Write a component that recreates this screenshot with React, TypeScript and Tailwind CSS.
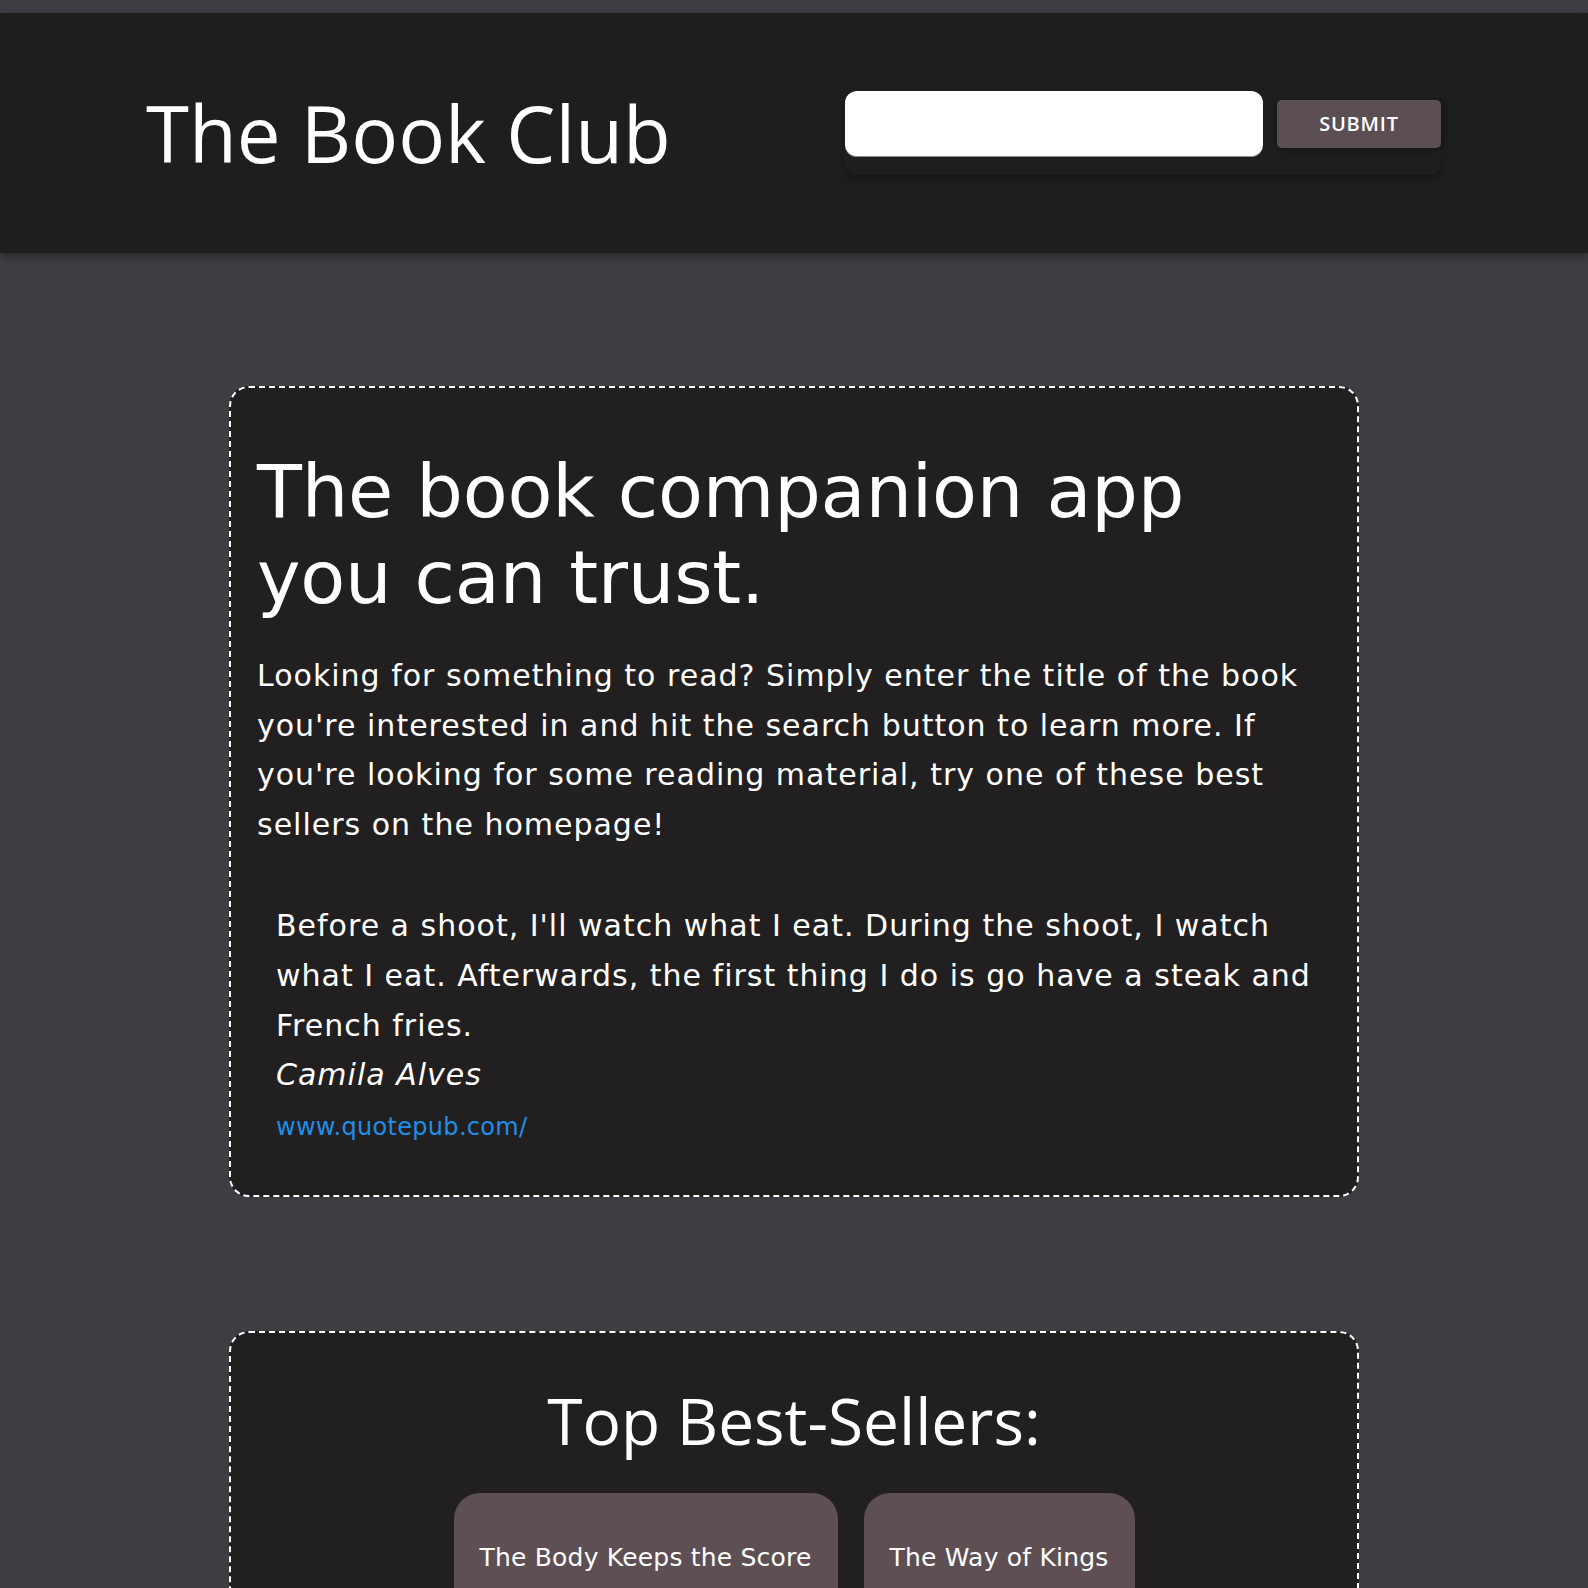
export default function App() {
  const books: string[] = ["The Body Keeps the Score", "The Way of Kings"];

  return (
    <div className="min-h-screen w-full bg-[#3e3d43] pt-[13px] pb-20 font-['DejaVu_Sans',sans-serif] text-white">
      {/* header */}
      <header className="h-[240px] bg-[#1e1e1e] shadow-[0_4px_8px_rgba(0,0,0,0.35)] flex items-center justify-between pl-[146px] pr-[147px]">
        <h1 className="font-['Open_Sans',sans-serif] text-[78px] leading-[106px] font-normal">The Book Club</h1>
        <form
          className="flex items-center gap-[14px] pb-[18px] rounded-xl shadow-[0_5px_8px_rgba(0,0,0,0.25)]"
          onSubmit={(e) => e.preventDefault()}
        >
          <input
            type="text"
            className="w-[418px] h-[66px] rounded-xl bg-white border-b border-[#8a8a8a] outline-none px-4 text-black text-2xl"
          />
          <button
            type="submit"
            className="w-[164px] h-[48px] rounded-[5px] bg-[#5c4f54] font-['Open_Sans',sans-serif] text-[20px] font-semibold tracking-[0.8px] text-white shadow-[0_2px_6px_rgba(0,0,0,0.3)]"
          >
            SUBMIT
          </button>
        </form>
      </header>

      {/* intro */}
      <section className="w-[1130px] mx-auto mt-[133px] rounded-[20px] border-2 border-dashed border-white bg-[#221f20] pt-[61px] pb-[50px] px-[26px]">
        <h2 className="text-[73.5px] leading-[86px] font-normal tracking-[-0.2px]">
          The book companion app
          <br />
          you can trust.
        </h2>
        <p className="mt-[30px] text-[30px] leading-[49.6px] tracking-[1px]">
          Looking for something to read? Simply enter the title of the book you're interested in and hit the search
          button to learn more. If you're looking for some reading material, try one of these best sellers on the
          homepage!
        </p>
        <blockquote className="mt-[52px] mx-[19px] text-[30px] leading-[49.6px] tracking-[1px]">
          <p>
            Before a shoot, I'll watch what I eat. During the shoot, I watch what I eat. Afterwards, the first thing I
            do is go have a steak and French fries.
          </p>
          <p className="italic">Camila Alves</p>
          <a href="#" className="block mt-[9px] text-[24px] leading-[36px] tracking-[0.3px] text-[#1e8fe8]">
            www.quotepub.com/
          </a>
        </blockquote>
      </section>

      {/* best sellers */}
      <section className="w-[1130px] mx-auto mt-[134px] rounded-[20px] border-2 border-dashed border-white bg-[#221f20] pt-[43px] pb-[60px] px-[26px]">
        <h2 className="text-center font-['Open_Sans',sans-serif] text-[64px] leading-[90px] font-normal">
          Top Best-Sellers:
        </h2>
        <div className="mt-[27px] flex justify-center gap-[26px]">
          {books.map((b) => (
            <div key={b} className="rounded-[26px] bg-[#5d4f54] px-[26px] pt-[50px] pb-[120px]">
              <p className="text-[25px] leading-[29px] tracking-[0.2px]">{b}</p>
            </div>
          ))}
        </div>
      </section>
    </div>
  );
}
